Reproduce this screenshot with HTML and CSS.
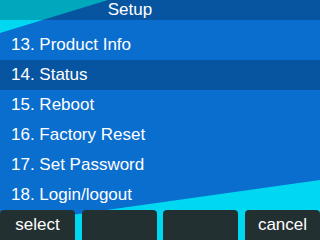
FILE: index.html
```html
<!DOCTYPE html>
<html lang="en">
<head>
    <meta charset="UTF-8">
    <meta name="viewport" content="width=device-width, initial-scale=1.0">
    <title>Setup</title>
    <link rel="stylesheet" href="styles.css">
</head>
<body>
    <div class="screen">
        <div class="title-bar">Setup</div>
        <ul class="menu">
            <li>13. Product Info</li>
            <li class="selected">14. Status</li>
            <li>15. Reboot</li>
            <li>16. Factory Reset</li>
            <li>17. Set Password</li>
            <li>18. Login/logout</li>
        </ul>
        <div class="softkeys">
            <div class="softkey">select</div>
            <div class="softkey"></div>
            <div class="softkey"></div>
            <div class="softkey">cancel</div>
        </div>
    </div>
</body>
</html>
```

FILE: styles.css
```css
body { margin: 0; font-family: "Liberation Sans", Arial, sans-serif; }
.screen { position: relative; width: 320px; height: 240px; overflow: hidden; background: #00d8f2; color: #fff; display: flex; flex-direction: column; }
.screen::before { content: ""; position: absolute; inset: 0; background: #0a6ecf; clip-path: polygon(108px 0, 320px 0, 320px 180px, 0 225px, 0 33px); }
.title-bar { position: relative; height: 20px; line-height: 20px; font-size: 17px; text-align: center; padding-right: 60px; background: rgba(0, 0, 0, 0.22); }
.menu { position: relative; list-style: none; margin: 0; padding: 10px 0 0; flex: 1; }
.menu li { height: 30px; line-height: 30px; font-size: 17px; padding-left: 11px; white-space: nowrap; }
.menu li.selected { background: rgba(0, 0, 0, 0.22); }
.softkeys { position: relative; height: 30px; display: flex; justify-content: space-between; }
.softkey { width: 75px; height: 30px; line-height: 30px; font-size: 17px; text-align: center; background: #223032; border-radius: 4px 4px 0 0; }
```
